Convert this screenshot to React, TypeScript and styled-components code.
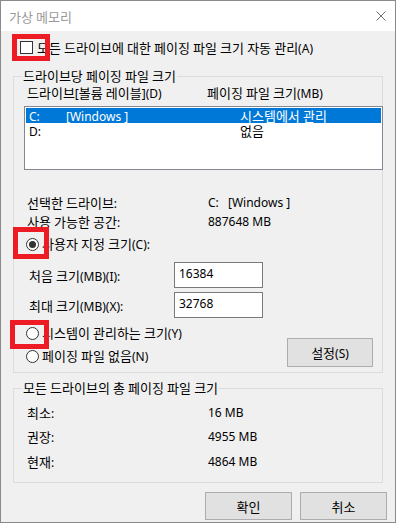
import React from "react";
import styled, { createGlobalStyle } from "styled-components";

const GlobalStyle = createGlobalStyle`
  html, body { margin: 0; padding: 0; background: #ffffff; }
  body {
    font-family: "Noto Sans", "Noto Sans CJK KR", sans-serif;
    font-size: 12px;
    color: #000;
  }
  * { box-sizing: border-box; }
`;

/* Hangul in Noto Sans CJK KR is 0.92em wide; the reference's Hangul is a full 12px,
   so Hangul runs are set at 13px while Latin stays at 12px. */
const Hangul = styled.span`
  font-family: "Noto Sans CJK KR", sans-serif;
  font-size: 13px;
`;

const HANGUL_RE = /([\u1100-\u11FF\u3130-\u318F\uAC00-\uD7AF]+)/;

function T({ children }: { children: string }) {
  const parts = children.split(HANGUL_RE);
  return (
    <>
      {parts.map((p, i) => (i % 2 === 1 ? <Hangul key={i}>{p}</Hangul> : p))}
    </>
  );
}

const Window = styled.div`
  width: 396px;
  height: 523px;
  border: 1px solid #8a8a8a;
  background: #f0f0f0;
  display: flex;
  flex-direction: column;
  overflow: hidden;
`;

const TitleBar = styled.div`
  height: 30px;
  flex: none;
  background: #ffffff;
  display: flex;
  align-items: center;
  justify-content: space-between;
  padding: 0 9px 0 8px;
  color: #999999;
  font-size: 12px;
`;

const CloseIcon = () => (
  <svg width="10" height="10" viewBox="0 0 10 10">
    <path d="M0.5 0.5 L9.5 9.5 M9.5 0.5 L0.5 9.5" stroke="#707070" strokeWidth="1" fill="none" />
  </svg>
);

const CheckRow = styled.label`
  display: flex;
  align-items: center;
  gap: 4px;
  height: 15px;
  line-height: 15px;
  margin: 9px 0 0 19px;
`;

const CheckBox = styled.span`
  position: relative;
  flex: none;
  width: 13px;
  height: 13px;
  border: 1px solid #333333;
  background: #ffffff;
`;

const RedMark = styled.span<{ $l: number; $t: number; $w: number; $h: number }>`
  position: absolute;
  left: ${(p) => p.$l}px;
  top: ${(p) => p.$t}px;
  width: ${(p) => p.$w}px;
  height: ${(p) => p.$h}px;
  border: 5px solid #ed1c24;
  pointer-events: none;
  z-index: 2;
`;

const Group = styled.fieldset<{ $pt: number; $pb: number; $mt: number }>`
  margin: ${(p) => p.$mt}px 0 0 12px;
  width: 370px;
  min-width: 0;
  padding: ${(p) => p.$pt}px 0 ${(p) => p.$pb}px 0;
  border: 1px solid #dcdcdc;
  flex: none;
`;

const Legend = styled.legend`
  margin-left: 8px;
  padding: 0 1px;
  height: 16px;
  line-height: 16px;
  font-size: 12px;
`;

const ColumnHeader = styled.div`
  display: grid;
  grid-template-columns: 180px auto;
  height: 16px;
  line-height: 16px;
  margin: 1px 0 0 13px;
`;

const ListBox = styled.div`
  margin: 5px 0 0 10px;
  width: 359px;
  height: 64px;
  border: 1px solid #828790;
  background: #ffffff;
  padding: 1px;
`;

const ListRow = styled.div<{ $selected?: boolean }>`
  display: grid;
  grid-template-columns: 37px 174px auto;
  align-items: center;
  height: 15px;
  line-height: 15px;
  padding-left: 3px;
  background: ${(p) => (p.$selected ? "#0078d7" : "transparent")};
  color: ${(p) => (p.$selected ? "#ffffff" : "#000000")};
  white-space: pre;
`;

const InfoBlock = styled.div<{ $mt: number }>`
  margin-top: ${(p) => p.$mt}px;
`;

const InfoRow = styled.div<{ $h: number }>`
  display: grid;
  grid-template-columns: 181px auto;
  height: ${(p) => p.$h}px;
  align-items: center;
  padding-left: 13px;
  white-space: pre;
`;

const DriveLetter = styled.span`
  display: inline-block;
  width: 20px;
`;

const RadioRow = styled.label<{ $mt?: number }>`
  display: flex;
  align-items: center;
  gap: 3px;
  height: 16px;
  line-height: 16px;
  padding-left: 12px;
  margin-top: ${(p) => p.$mt ?? 0}px;
`;

const Radio = styled.span<{ $checked?: boolean }>`
  position: relative;
  flex: none;
  width: 13px;
  height: 13px;
  border-radius: 50%;
  border: 1px solid #333333;
  background: #ffffff;
  &::after {
    content: "";
    display: ${(p) => (p.$checked ? "block" : "none")};
    position: absolute;
    left: 2px;
    top: 2px;
    width: 7px;
    height: 7px;
    border-radius: 50%;
    background: #333333;
  }
`;

const SizeBlock = styled.div`
  margin-top: 10px;
  display: flex;
  flex-direction: column;
  gap: 4px;
`;

const SizeRow = styled.div`
  display: grid;
  grid-template-columns: 145px 89px;
  align-items: center;
  height: 26px;
  padding-left: 15px;
`;

const SizeInput = styled.input`
  width: 89px;
  height: 26px;
  border: 1px solid #7a7a7a;
  background: #ffffff;
  font: inherit;
  color: #000;
  padding: 0 4px 4px;
  outline: none;
`;

const OptionArea = styled.div`
  display: flex;
  justify-content: space-between;
  align-items: flex-start;
  margin-top: 7px;
  padding-right: 9px;
`;

const RadioColumn = styled.div`
  display: flex;
  flex-direction: column;
  gap: 7px;
`;

const PushButton = styled.button<{ $w: number; $h: number; $mt?: number }>`
  width: ${(p) => p.$w}px;
  height: ${(p) => p.$h}px;
  margin-top: ${(p) => p.$mt ?? 0}px;
  background: #e1e1e1;
  border: 1px solid #adadad;
  font: inherit;
  color: #000;
  padding: 0;
  flex: none;
`;

const TotalsList = styled.div`
  padding-top: 2px;
`;

const ButtonBar = styled.div`
  display: flex;
  justify-content: flex-end;
  gap: 8px;
  margin-top: 9px;
  padding-right: 8px;
`;

export default function App() {
  return (
    <>
      <GlobalStyle />
      <Window>
        <TitleBar>
          <span>
            <T>가상 메모리</T>
          </span>
          <CloseIcon />
        </TitleBar>

        <CheckRow>
          <CheckBox>
            <RedMark $l={-9} $t={-8} $w={38} $h={27} />
          </CheckBox>
          <span>
            <T>모든 드라이브에 대한 페이징 파일 크기 자동 관리(A)</T>
          </span>
        </CheckRow>

        <Group $mt={13} $pt={0} $pb={5}>
          <Legend>
            <T>드라이브당 페이징 파일 크기</T>
          </Legend>
          <ColumnHeader>
            <span>
              <T>드라이브[볼륨 레이블](D)</T>
            </span>
            <span>
              <T>페이징 파일 크기(MB)</T>
            </span>
          </ColumnHeader>
          <ListBox>
            <ListRow $selected>
              <span>C:</span>
              <span>[Windows ]</span>
              <span>
                <T>시스템에서 관리</T>
              </span>
            </ListRow>
            <ListRow>
              <span>D:</span>
              <span></span>
              <span>
                <T>없음</T>
              </span>
            </ListRow>
          </ListBox>

          <InfoBlock $mt={23}>
            <InfoRow $h={19}>
              <span>
                <T>선택한 드라이브:</T>
              </span>
              <span>
                <DriveLetter>C:</DriveLetter>[Windows ]
              </span>
            </InfoRow>
            <InfoRow $h={19}>
              <span>
                <T>사용 가능한 공간:</T>
              </span>
              <span>887648 MB</span>
            </InfoRow>
          </InfoBlock>

          <RadioRow $mt={5}>
            <Radio $checked>
              <RedMark $l={-14} $t={-12} $w={36} $h={32} />
            </Radio>
            <span>
              <T>사용자 지정 크기(C):</T>
            </span>
          </RadioRow>

          <SizeBlock>
            <SizeRow>
              <span>
                <T>처음 크기(MB)(I):</T>
              </span>
              <SizeInput readOnly value="16384" />
            </SizeRow>
            <SizeRow>
              <span>
                <T>최대 크기(MB)(X):</T>
              </span>
              <SizeInput readOnly value="32768" />
            </SizeRow>
          </SizeBlock>

          <OptionArea>
            <RadioColumn>
              <RadioRow>
                <Radio>
                  <RedMark $l={-17} $t={-8} $w={39} $h={29} />
                </Radio>
                <span>
                  <T>시스템이 관리하는 크기(Y)</T>
                </span>
              </RadioRow>
              <RadioRow>
                <Radio />
                <span>
                  <T>페이징 파일 없음(N)</T>
                </span>
              </RadioRow>
            </RadioColumn>
            <PushButton $w={86} $h={29} $mt={13}>
              <T>설정(S)</T>
            </PushButton>
          </OptionArea>
        </Group>

        <Group $mt={7} $pt={2} $pb={8.5}>
          <Legend>
            <T>모든 드라이브의 총 페이징 파일 크기</T>
          </Legend>
          <TotalsList>
            <InfoRow $h={24.5}>
              <span>
                <T>최소:</T>
              </span>
              <span>16 MB</span>
            </InfoRow>
            <InfoRow $h={24.5}>
              <span>
                <T>권장:</T>
              </span>
              <span>4955 MB</span>
            </InfoRow>
            <InfoRow $h={24.5}>
              <span>
                <T>현재:</T>
              </span>
              <span>4864 MB</span>
            </InfoRow>
          </TotalsList>
        </Group>

        <ButtonBar>
          <PushButton $w={87} $h={28}>
            <T>확인</T>
          </PushButton>
          <PushButton $w={87} $h={28}>
            <T>취소</T>
          </PushButton>
        </ButtonBar>
      </Window>
    </>
  );
}
